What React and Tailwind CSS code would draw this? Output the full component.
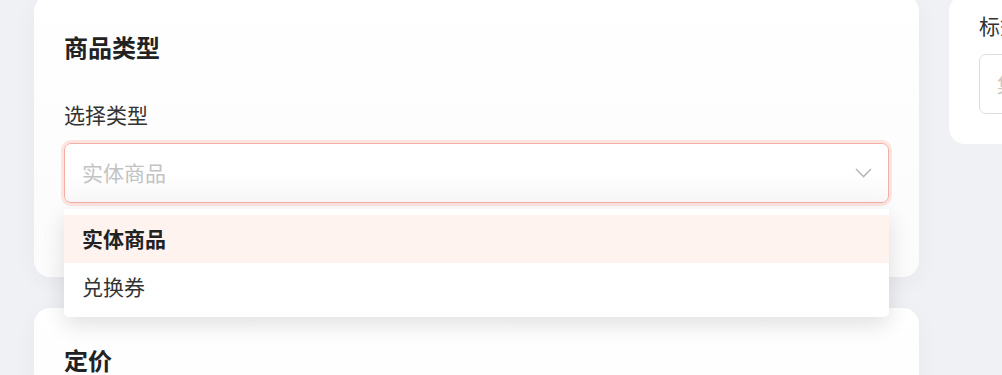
import React, { useState } from "react";

const font = { fontFamily: '"Noto Sans CJK SC", "Noto Sans", sans-serif' };

const options = ["实体商品", "兑换券"];

const ProductTypeCard = () => {
  const [selected, setSelected] = useState(0);

  return (
    <div className="relative mt-[-5px] h-[282px] rounded-2xl bg-gradient-to-b from-white to-[#fbfbfc] px-[30px] pt-[36px] shadow-[0_6px_24px_rgba(20,20,40,0.04)]">
      <h2 className="text-[24px] leading-[32px] font-bold text-[#222]">商品类型</h2>
      <div className="mt-[37px] text-[21px] leading-[28px] text-[#333]">选择类型</div>
      <div className="mt-[15px] flex h-[60px] items-center justify-between rounded-[7px] border-[1.5px] border-[#f5aea3] bg-gradient-to-b from-white via-white to-[#f7f7f8] pl-[17px] pr-[16px] shadow-[0_0_0_3px_#fde4e0]">
        <span className="text-[21px] text-[#c3c3c3]">实体商品</span>
        <svg width="17" height="10" viewBox="0 0 17 10" fill="none">
          <path d="M1 1l7.5 7.5L16 1" stroke="#b9b9b9" strokeWidth="1.6" />
        </svg>
      </div>

      {/* dropdown menu */}
      <div className="absolute left-[30px] right-[30px] top-[214px] z-10 rounded-b-[5px] bg-white py-[6px] shadow-[0_8px_22px_rgba(0,0,0,0.12)]">
        {options.map((opt, i) => (
          <div
            key={opt}
            onClick={() => setSelected(i)}
            className={
              "flex h-[48px] cursor-pointer items-center px-[18px] text-[21px]" +
              (selected === i ? " bg-[#fff3ef] font-bold text-[#222]" : " text-[#333]")
            }
          >
            {opt}
          </div>
        ))}
      </div>
    </div>
  );
};

const PriceCard = () => {
  return (
    <div className="h-[200px] rounded-2xl bg-gradient-to-b from-white to-[#fbfbfc] px-[30px] pt-[36px] shadow-[0_6px_24px_rgba(20,20,40,0.04)]">
      <h2 className="text-[24px] leading-[32px] font-bold text-[#222]">定价</h2>
    </div>
  );
};

const TagCard = () => {
  return (
    <div className="mt-[-5px] w-[320px] rounded-2xl bg-white pb-[30px] pl-[30px] pr-[30px] pt-[16px]">
      <div className="text-[21px] leading-[28px] text-[#333]">标签</div>
      <div className="mt-[15px] flex h-[60px] items-center rounded-[7px] border border-[#dedede] px-[17px]">
        <span className="whitespace-nowrap text-[21px] text-[#cfc8c2]">集合标签，用逗号分隔</span>
      </div>
    </div>
  );
};

export default function App() {
  return (
    <div className="h-[375px] w-[1002px] overflow-hidden bg-[#f0f1f5]" style={font}>
      <div className="flex gap-[30px] pl-[34px]">
        <div className="flex w-[885px] shrink-0 flex-col gap-[31px]">
          <ProductTypeCard />
          <PriceCard />
        </div>
        <div className="shrink-0">
          <TagCard />
        </div>
      </div>
    </div>
  );
}
